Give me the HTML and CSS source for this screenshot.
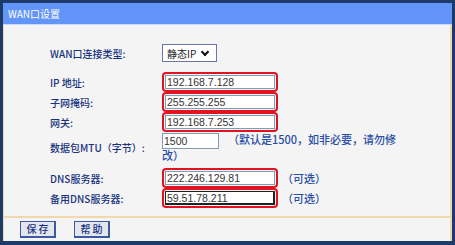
FILE: index.html
```html
<!DOCTYPE html>
<html lang="zh-CN">
<head>
  <meta charset="UTF-8">
  <title>WAN口设置</title>
  <link rel="stylesheet" href="styles.css">
</head>
<body>
  <div class="window">
    <div class="title">WAN口设置</div>

    <div class="content">
      <div class="row row-type">
        <span class="label">WAN口连接类型:</span>
        <span class="select">静态IP <span class="arrow"></span></span>
      </div>

      <div class="row row-first">
        <span class="label">IP 地址:</span>
        <span class="hl"><input type="text" value="192.168.7.128"></span>
      </div>
      <div class="row">
        <span class="label">子网掩码:</span>
        <span class="hl"><input type="text" value="255.255.255"></span>
      </div>
      <div class="row">
        <span class="label">网关:</span>
        <span class="hl"><input type="text" value="192.168.7.253"></span>
      </div>

      <div class="row row-mtu">
        <span class="label">数据包MTU（字节）:</span>
        <span class="value"><input type="text" class="short" value="1500">（默认是1500，如非必要，请勿修改）</span>
      </div>

      <div class="row row-dns">
        <span class="label">DNS服务器:</span>
        <span class="hl"><input type="text" value="222.246.129.81"></span>
        <span class="opt">（可选）</span>
      </div>
      <div class="row">
        <span class="label">备用DNS服务器:</span>
        <span class="hl"><input type="text" class="focus" value="59.51.78.211"></span>
        <span class="opt">（可选）</span>
      </div>
    </div>

    <div class="footer">
      <button type="button">保 存</button>
      <button type="button">帮 助</button>
    </div>
  </div>
</body>
</html>
```

FILE: styles.css
```css
body {
  margin: 3px 3px 4px 3px;
  background-color: #1d3a68;
  font-family: "Noto Sans CJK SC", "Liberation Sans", sans-serif;
  font-size: 10px;
  color: #17337f;
}

.window {
  height: 238px;
  display: flex;
  flex-direction: column;
  background-color: #f4f4f4;
}

.title {
  height: 21px;
  line-height: 21px;
  padding-left: 5px;
  background-color: #6395f8;
  border-bottom: 1px solid #c9d9fb;
  color: #fff;
  font-size: 10px;
}

.content {
  flex: 1;
  padding: 19px 0 0 46px;
  border-left: 1px solid #f1dcbb;
  border-right: 2px solid #f1d7ad;
  border-bottom: 2px solid #f1d7ad;
}

.row {
  display: flex;
  align-items: center;
}

.label {
  width: 112px;
  flex-shrink: 0;
  font-weight: 500;
}

.row-first {
  margin-top: 10px;
}

.row-mtu {
  margin-top: 1px;
}

.row-dns {
  margin-top: 6px;
}

.select {
  display: inline-flex;
  align-items: center;
  gap: 6px;
  height: 16px;
  width: 49px;
  padding-left: 4px;
  border: 1px solid #6b73a8;
  background-color: #fff;
  color: #222;
  font-size: 10px;
}

.arrow {
  width: 4px;
  height: 4px;
  border-right: 2px solid #111;
  border-bottom: 2px solid #111;
  transform: rotate(45deg);
  margin-top: -3px;
}

.hl {
  display: inline-flex;
  width: 116px;
  height: 20px;
  box-sizing: border-box;
  padding: 1px 3px 1px 1px;
  border: 2px solid #e2121f;
  border-radius: 4px;
}

input {
  box-sizing: border-box;
  width: 110px;
  height: 14px;
  margin: 0;
  padding: 0 1px;
  border: 1px solid #7f9db9;
  background-color: #fff;
  font-family: "Liberation Sans", sans-serif;
  font-size: 10.5px;
  color: #333;
}

input.focus {
  border: 1px solid #222;
  border-right-width: 2px;
  border-bottom-width: 2px;
}

.value {
  width: 240px;
  font-size: 11px;
  line-height: 13px;
  color: #2a4ea6;
  font-weight: 500;
}

input.short {
  width: 57px;
  height: 16px;
  vertical-align: top;
  margin-right: 9px;
}

.opt {
  margin-left: 4px;
  font-size: 11px;
  color: #2a4ea6;
  font-weight: 500;
}

.footer {
  height: 23px;
  display: flex;
  align-items: center;
  gap: 18px;
  padding-left: 16px;
  border-left: 1px solid #f1dcbb;
  border-right: 2px solid #f1d7ad;
}

button {
  width: 36px;
  height: 17px;
  padding: 0;
  border: 1px solid #3c5aa0;
  border-right-width: 2px;
  border-bottom-width: 2px;
  background-color: #e4e6ee;
  color: #17337f;
  font-family: "Noto Sans CJK SC", sans-serif;
  font-size: 10px;
  font-weight: 500;
  line-height: 14px;
}
```
